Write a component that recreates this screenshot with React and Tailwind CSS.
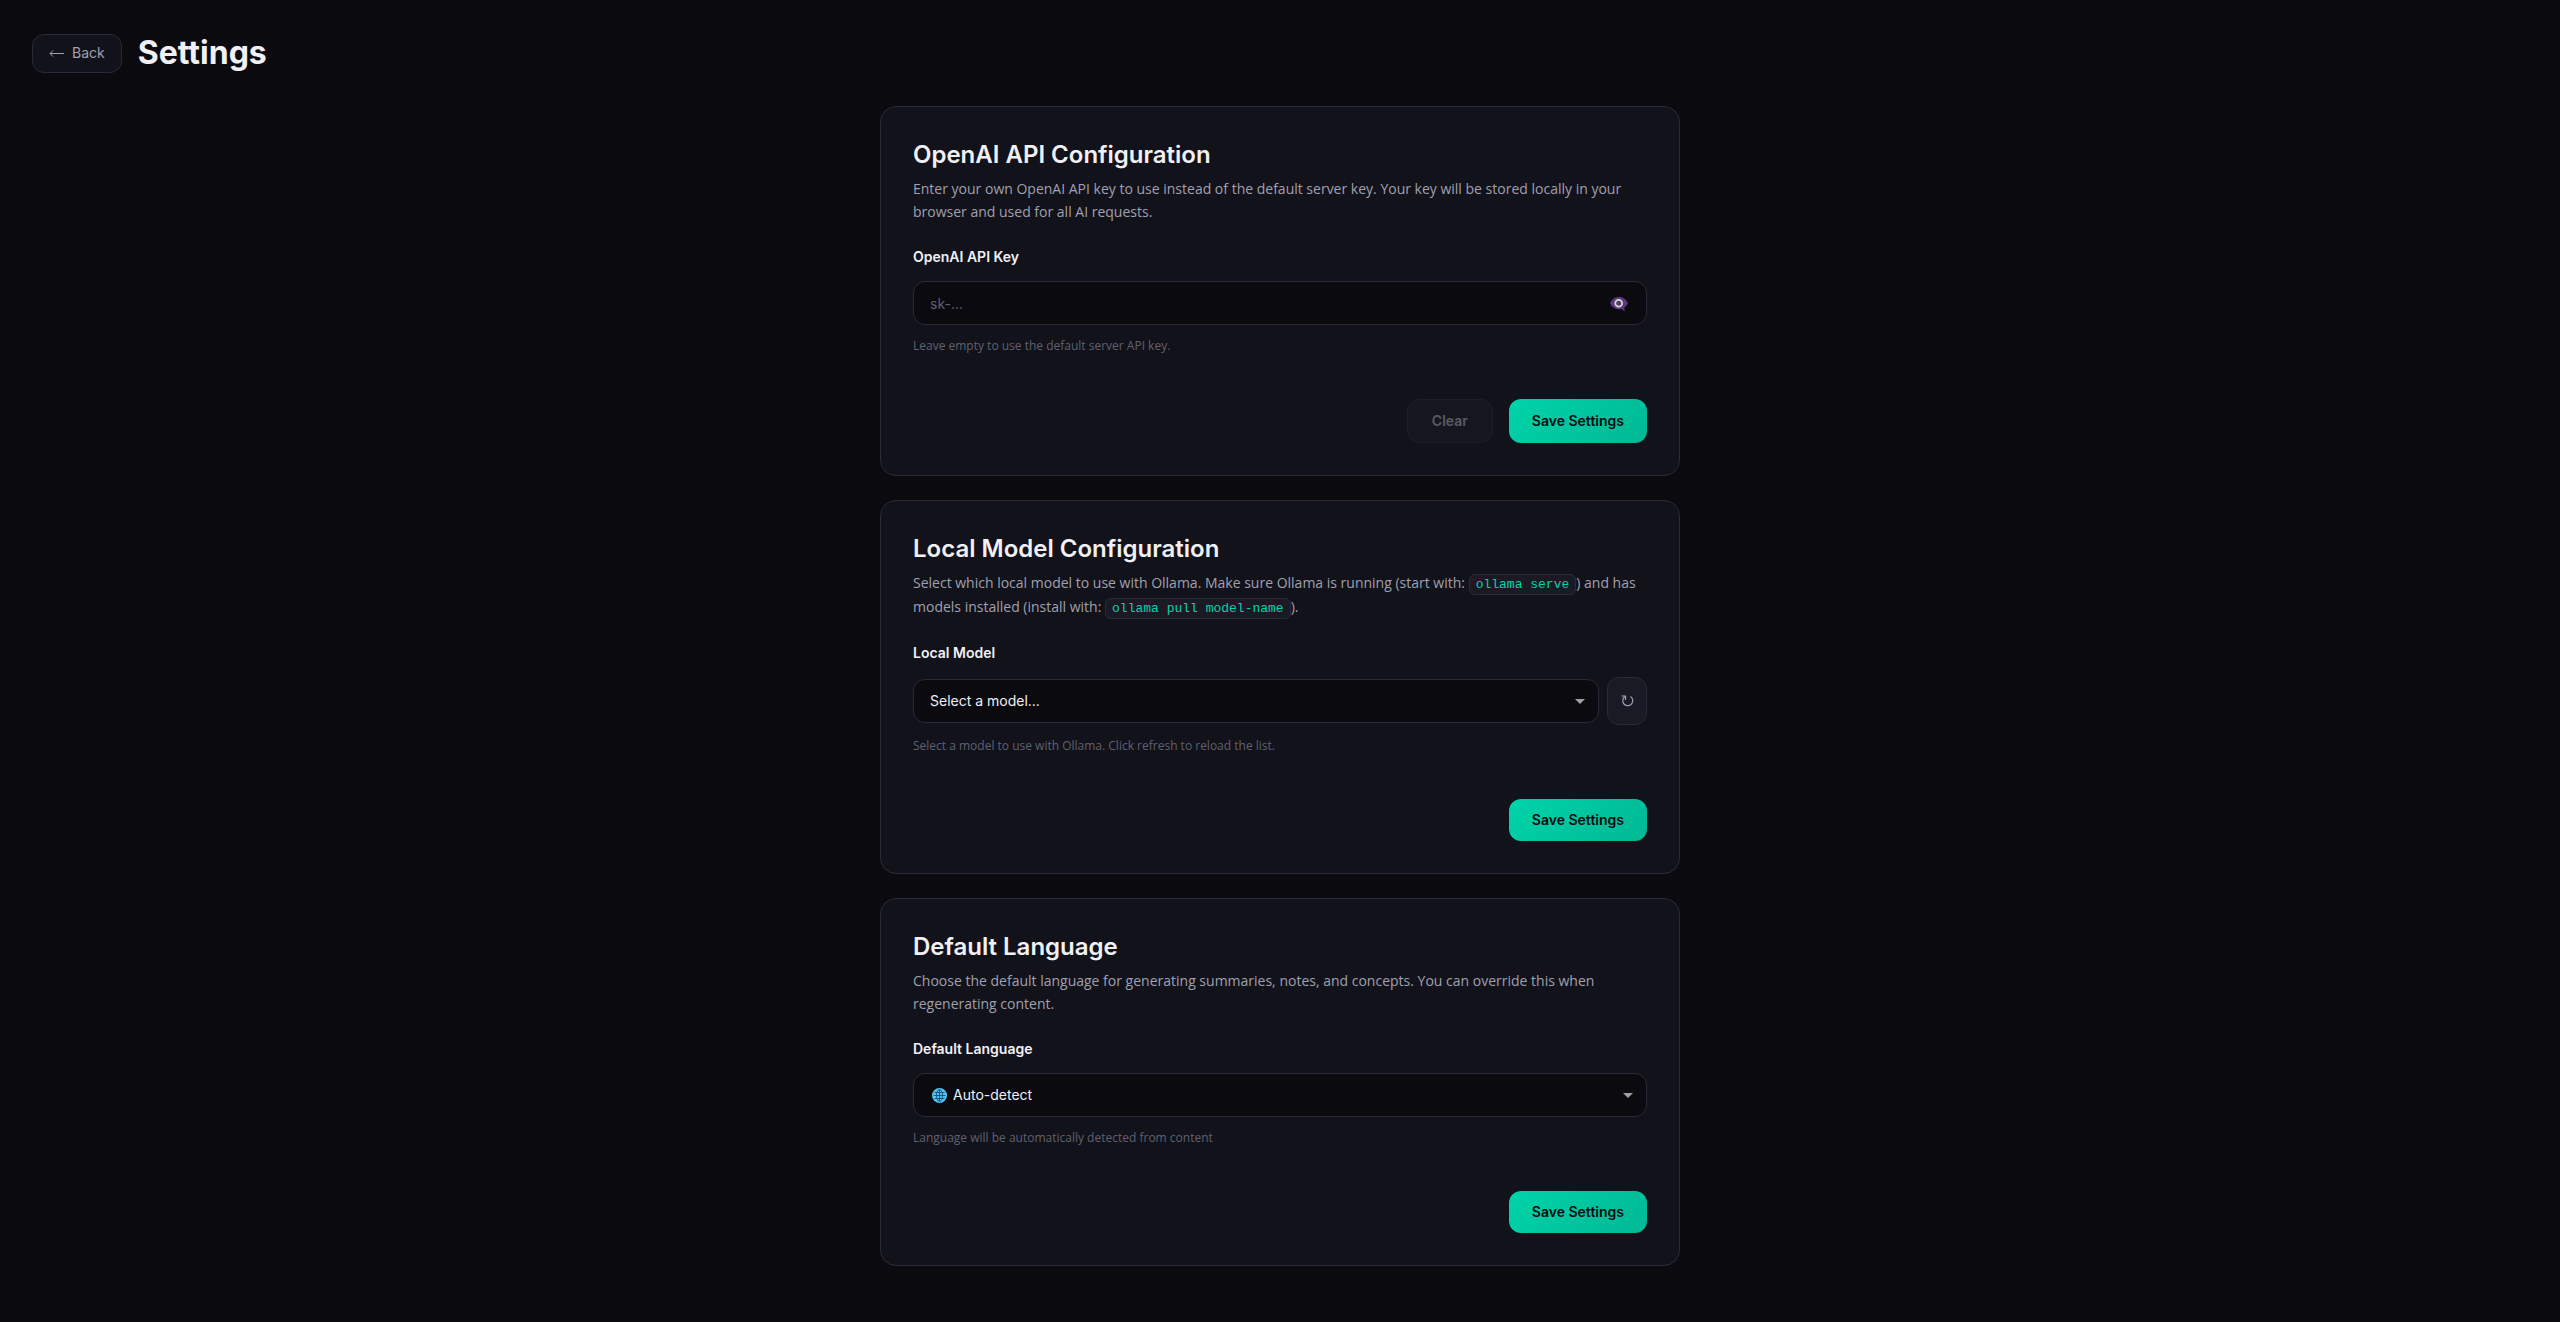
import React, { useState } from "react";

const buttonBase = "rounded-xl border text-sm font-semibold";

const Card = ({ title, description, children }) => (
    <section className="rounded-2xl border border-[#2a2a3a] bg-[#12121a] p-8">
        <h2 className="mb-1.5 text-2xl leading-8 font-semibold text-[#f0f0f5]">{title}</h2>
        <p className="mb-6 font-['Open_Sans',sans-serif] text-sm leading-[23px] text-[#a0a0b0]">{description}</p>
        {children}
    </section>
);

const Code = ({ children }) => (
    <code className="rounded-md border border-[#2a2a3a] bg-[#1a1a24] px-1.5 py-0.5 font-['Liberation_Mono',monospace] text-[13px] leading-[21px] text-[#00d4aa]">
        {children}
    </code>
);

const Label = ({ htmlFor, children }) => (
    <label htmlFor={htmlFor} className="mb-3.5 block text-sm leading-5 font-semibold text-[#f0f0f5]">
        {children}
    </label>
);

const Hint = ({ children }) => (
    <p className="mt-3 font-['Open_Sans',sans-serif] text-xs leading-[18px] text-[#606070]">{children}</p>
);

const SaveButton = ({ className = "h-[42px]" }) => (
    <button
        type="button"
        className={`${buttonBase} ${className} border-transparent bg-linear-135 from-[#00d4aa] to-[#00b894] bg-origin-border px-[22px] text-[#0a0a0f]`}
    >
        Save Settings
    </button>
);

const BackArrow = () => (
    <svg width="15" height="8" viewBox="0 0 15 8" fill="none" stroke="currentColor" aria-hidden="true">
        <path d="M1 4.5h14M4 1.5 1 4.5l3 3" />
    </svg>
);

const EyeBubble = () => (
    <svg width="18" height="15" viewBox="0 0 18 15" aria-hidden="true">
        <path
            d="M9 0C4.500 0 1.600 2.600 0 6.300c1.600 3.600 4.500 6 9 6 1.100 0 2-.1 2.800-.4L14.500 14.500v-4.200c1.500-1 2.700-2.400 3.500-4C16.400 2.600 13.500 0 9 0Z"
            fill="#5b3a7a"
        />
        <circle cx="8.700" cy="6.300" r="3.400" fill="#4b4257" stroke="#d8d4de" strokeWidth="1.800" />
    </svg>
);

const Globe = () => (
    <svg width="15" height="15" viewBox="0 0 15 15" aria-hidden="true">
        <circle cx="7.500" cy="7.500" r="7.500" fill="#55c3f5" />
        <g fill="none" stroke="#15506f" strokeWidth="0.9">
            <path d="M7.500 1.500v12M1.500 7.500h12M2.500 4.500h10M2.500 10.500h10" />
            <ellipse cx="7.500" cy="7.500" rx="3" ry="6" />
        </g>
    </svg>
);

const Refresh = () => (
    <svg width="14" height="12" viewBox="0 0 14 12" fill="none" stroke="currentColor" strokeWidth="1.2" aria-hidden="true">
        <path d="M10.500 1.500A5 5 0 1 1 4.600 1.800M1.500 1h4v4" />
    </svg>
);

const Select = ({ id, value, onChange, icon, options }) => (
    <div className="relative flex-1">
        <select
            id={id}
            value={value}
            onChange={(e) => onChange(e.target.value)}
            className={`block h-11 w-full appearance-none rounded-xl border border-[#2a2a3a] bg-[#0a0a0f] pr-10 text-sm text-[#f0f0f5] ${icon ? "pl-[39px]" : "pl-4"}`}
        >
            {options.map((o) => (
                <option key={o.value} value={o.value}>{o.label}</option>
            ))}
        </select>
        {icon && <span className="pointer-events-none absolute inset-y-0 left-[19px] flex items-center">{icon}</span>}
        <span className="pointer-events-none absolute inset-y-0 right-3.5 flex items-center text-[#a0a0a0]">
            <svg width="10" height="5" viewBox="0 0 10 5" fill="currentColor" aria-hidden="true">
                <path d="M0 0h10L5 5Z" />
            </svg>
        </span>
    </div>
);

const App = () => {
    const [apiKey, setApiKey] = useState("");
    const [showKey, setShowKey] = useState(false);
    const [model, setModel] = useState("");
    const [language, setLanguage] = useState("auto");

    return (
        <div className="min-h-screen bg-[#0a0a0f] px-8 pb-14 font-[Inter,sans-serif]">
            <header className="flex items-center gap-4 py-8">
                <button
                    type="button"
                    className="flex h-[39px] items-center gap-2 rounded-xl border border-[#2a2a3a] bg-[#12121a] px-4 text-sm text-[#a0a0b0]"
                >
                    <BackArrow />
                    Back
                </button>
                <h1 className="text-[32px] leading-[42px] font-bold text-[#f0f0f5]">Settings</h1>
            </header>

            <main className="mx-auto flex max-w-[800px] flex-col gap-6">
                <Card
                    title="OpenAI API Configuration"
                    description="Enter your own OpenAI API key to use instead of the default server key. Your key will be stored locally in your browser and used for all AI requests."
                >
                    <Label htmlFor="api-key">OpenAI API Key</Label>
                    <div className="relative">
                        <input
                            id="api-key"
                            type={showKey ? "text" : "password"}
                            value={apiKey}
                            onChange={(e) => setApiKey(e.target.value)}
                            placeholder="sk-..."
                            className="block h-11 w-full rounded-xl border border-[#2a2a3a] bg-[#0a0a0f] pr-12 pl-4 text-sm text-[#f0f0f5] placeholder:text-[#606070]"
                        />
                        <button
                            type="button"
                            aria-label="Show API key"
                            onClick={() => setShowKey(!showKey)}
                            className="absolute inset-y-0 right-[19px] flex items-center pt-0.5"
                        >
                            <EyeBubble />
                        </button>
                    </div>
                    <Hint>Leave empty to use the default server API key.</Hint>
                    <div className="mt-11 flex justify-end gap-4">
                        <button
                            type="button"
                            disabled={!apiKey}
                            onClick={() => setApiKey("")}
                            className={`${buttonBase} h-11 border-[#2a2a3a] bg-[#1a1a24] px-6 text-[#a0a0b0] disabled:opacity-50`}
                        >
                            Clear
                        </button>
                        <SaveButton className="h-11" />
                    </div>
                </Card>

                <Card
                    title="Local Model Configuration"
                    description={
                        <>
                            Select which local model to use with Ollama. Make sure Ollama is running (start with:{" "}
                            <Code>ollama serve</Code>) and has models installed (install with:{" "}
                            <Code>ollama pull model-name</Code>).
                        </>
                    }
                >
                    <Label htmlFor="local-model">Local Model</Label>
                    <div className="flex items-center gap-2">
                        <Select
                            id="local-model"
                            value={model}
                            onChange={setModel}
                            options={[{ value: "", label: "Select a model..." }]}
                        />
                        <button
                            type="button"
                            aria-label="Refresh models"
                            className="flex h-12 w-10 items-center justify-center rounded-xl border border-[#2a2a3a] bg-[#1a1a24] text-[#a0a0b0]"
                        >
                            <Refresh />
                        </button>
                    </div>
                    <Hint>Select a model to use with Ollama. Click refresh to reload the list.</Hint>
                    <div className="mt-11 flex justify-end">
                        <SaveButton />
                    </div>
                </Card>

                <Card
                    title="Default Language"
                    description="Choose the default language for generating summaries, notes, and concepts. You can override this when regenerating content."
                >
                    <Label htmlFor="language">Default Language</Label>
                    <Select
                        id="language"
                        value={language}
                        onChange={setLanguage}
                        icon={<Globe />}
                        options={[{ value: "auto", label: "Auto-detect" }]}
                    />
                    <Hint>Language will be automatically detected from content</Hint>
                    <div className="mt-11 flex justify-end">
                        <SaveButton />
                    </div>
                </Card>
            </main>
        </div>
    );
};

export default App;
